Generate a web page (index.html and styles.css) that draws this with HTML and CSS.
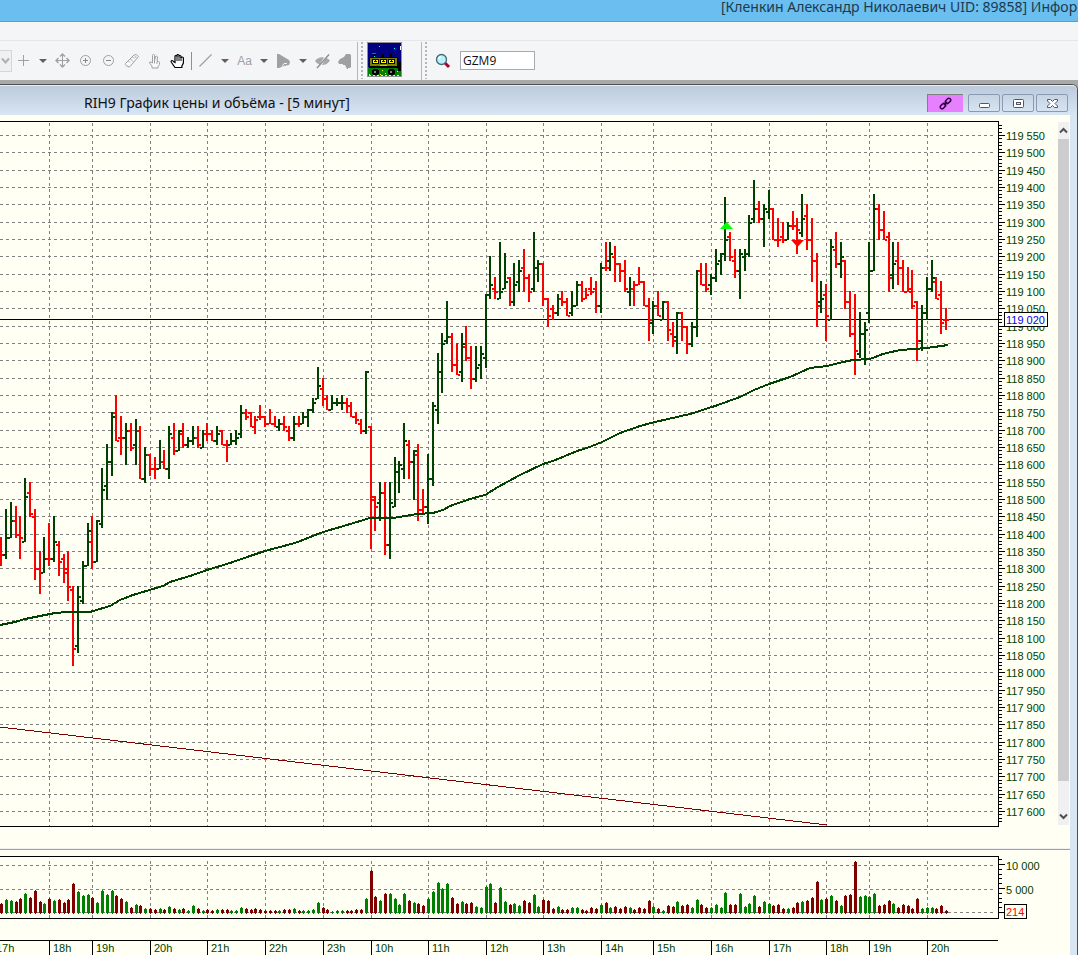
FILE: index.html
```html
<!DOCTYPE html>
<html lang="ru">
<head>
    <meta charset="UTF-8">
    <meta name="viewport" content="width=device-width, initial-scale=1.0">
    <title>RIH9 График цены и объёма</title>
    <link rel="stylesheet" href="styles.css">
</head>
<body>
    <!-- Application title -->
    <header class="app-title">[Кленкин Александр Николаевич UID: 89858] Инфор</header>
    <div class="menu-strip"></div>

    <!-- Toolbar -->
    <div class="toolbar">
        <button class="combo-end" aria-label="Список">
            <svg width="9" height="8" viewBox="0 0 9 8"><path d="M1 1.5l3.5 4 3.5-4" fill="none" stroke="#b0b0b0" stroke-width="2"/></svg>
        </button>
        <button class="tool" aria-label="Курсор">
            <svg width="15" height="15" viewBox="0 0 15 15"><path d="M7.5 2v11M2 7.5h11" stroke="#a0a0a0"/></svg>
        </button>
        <button class="caret" aria-label="Ещё"></button>
        <button class="tool" aria-label="Переместить">
            <svg width="15" height="15" viewBox="0 0 15 15"><path d="M7.5 1v13M1 7.5h13" stroke="#a0a0a0"/><path d="M5 3.5L7.5 1 10 3.5M5 11.5L7.5 14l2.5-2.5M3.5 5L1 7.5 3.5 10M11.5 5L14 7.5 11.5 10" fill="none" stroke="#a0a0a0" stroke-width="1.4"/></svg>
        </button>
        <button class="tool" aria-label="Увеличить">
            <svg width="15" height="15" viewBox="0 0 15 15"><circle cx="7.5" cy="7.5" r="5" fill="none" stroke="#a0a0a0"/><path d="M7.5 5v5M5 7.5h5" stroke="#888"/></svg>
        </button>
        <button class="tool" aria-label="Уменьшить">
            <svg width="15" height="15" viewBox="0 0 15 15"><circle cx="7.5" cy="7.5" r="5" fill="none" stroke="#a0a0a0"/><path d="M5 7.5h5" stroke="#888"/></svg>
        </button>
        <button class="tool" aria-label="Линейка">
            <svg width="16" height="16" viewBox="0 0 16 16"><path d="M1.5 10.5L10 2q2.500-1.500 4.500 1.500L6 13.500q-1 1-2 0L2 12.500q-1-1-.5-2z" fill="#fafafa" stroke="#a0a0a0"/><path d="M4.500 8l1.500 1.500M6.500 6L9 8.500M8.500 4l1.500 1.500M10.500 4h2" stroke="#a0a0a0"/></svg>
        </button>
        <button class="tool" aria-label="Указать">
            <svg width="15" height="16" viewBox="0 0 15 16"><path d="M5.500 9V2.500q0-1 1-1t1 1V8l1-4.500q1.500-1 2 .5L10 8.500h1.500q1 0 1 1v2l-1.500 2v1.500H5V13l-2.500-3q0-1.500 1.500-1l1.500 1z" fill="#fafafa" stroke="#a0a0a0"/><path d="M7.500 8v2.500M10 9v2" stroke="#a0a0a0"/></svg>
        </button>
        <button class="tool" aria-label="Прокрутка">
            <svg width="16" height="16" viewBox="0 0 16 16"><path d="M5 14.500L1.500 9.500q-1-1.500.5-2 1 0 2 1.500l1 .5V3.500q0-1 1-1t1 1v-1q0-1 1-1t1 1v1q0-1 1-1t1 1V5q0-1 1.200-1t1.200 1v5l-1.500 3v1.500z" fill="#fff" stroke="#000" stroke-width="1.200"/><path d="M7 3v5M9 3v5M11 4v4" stroke="#000"/></svg>
        </button>
        <span class="tool-separator"></span>
        <button class="tool" aria-label="Линия">
            <svg width="15" height="15" viewBox="0 0 15 15"><path d="M1.500 13.500l12-12" stroke="#a0a0a0" stroke-width="1.200"/></svg>
        </button>
        <button class="caret" aria-label="Ещё"></button>
        <button class="tool text-tool" aria-label="Текст">Aa</button>
        <button class="caret" aria-label="Ещё"></button>
        <button class="tool" aria-label="Фигура">
            <svg width="15" height="16" viewBox="0 0 15 16"><path d="M1 1h2l10 6 1 2-1 3-5 1-5 2H1z" fill="#a0a0a0"/><path d="M6 13.500l2-3h3" fill="none" stroke="#f4f5f7"/></svg>
        </button>
        <button class="caret" aria-label="Ещё"></button>
        <button class="tool" aria-label="Скрыть">
            <svg width="17" height="16" viewBox="0 0 17 16"><path d="M1 8q3.500-4.500 9-3.500L5.500 11.500Q3 11 1 8zM16 7.500q-3 4.500-8 4.500L12 5q2.500.5 4 2.500z" fill="#a8a8a8"/><path d="M3 15L15 1.500" stroke="#8c8c8c" stroke-width="1.300"/></svg>
        </button>
        <button class="tool" aria-label="Метка">
            <svg width="15" height="16" viewBox="0 0 15 16"><path d="M0 9l2-3 4-2 2-3h4l1 1v12l-1 1h-2v1H9l-2-4H5v-1H1z" fill="#a0a0a0"/></svg>
        </button>
        <span class="toolbar-end"></span>

        <span class="grip"></span>
        <button class="bus" aria-label="Автобус">
            <svg width="35" height="35" viewBox="0 0 35 35" shape-rendering="crispEdges">
                <path d="M0 0h35v35H0z" fill="#909090"/>
                <path d="M1 1h33v33H1z" fill="#000080"/>
                <path d="M1 25h33v9H1z" fill="#008000"/>
                <path d="M31 20h3v9h-3zM6 12h3v3H6zM14 12h3v3h-3zM22 12h3v3h-3z" fill="#000"/>
                <path d="M5 11h4v1H5zM26 22h1v1h-1z" fill="#00a000"/>
                <path d="M12 4h1v1h-1zM27 6h1v1h-1zM7 14h1v1H7z" fill="#0ff"/>
                <path d="M2 15h29v11H2z" fill="#000"/>
                <path d="M3 16h27v8H3z" fill="#808000"/>
                <path d="M5 17h7v5H5zM13 17h7v5h-7zM21 17h7v5h-7z" fill="#000"/>
                <path d="M6 18h5v3H6zM14 18h5v3h-5zM22 18h5v3h-5z" fill="#ff0"/>
                <path d="M8 18h1v1H8zM16 18h1v1h-1zM24 18h1v1h-1zM7 19h3v1H7zM15 19h3v1h-3zM23 19h3v1h-3z" fill="#000"/>
                <path d="M13 23h7v1h-7z" fill="#0ff"/>
                <path d="M6 27h5v1h1v4h-1v1H6v-1H5v-4h1zM22 27h5v1h1v4h-1v1h-5v-1h-1v-4h1z" fill="#000"/>
                <path d="M7 29h2v2H7zM23 29h2v2h-2z" fill="#808080"/>
                <path d="M15 28h1v1h-1zM18 31h1v1h-1zM30 29h1v1h-1zM2 32h1v1H2zM13 32h1v1h-1z" fill="#ff0"/>
                <path d="M33 4h1v4h-1z" fill="#fff"/>
                <path d="M2 33.500h32" stroke="#ff0" stroke-dasharray="2 2"/>
            </svg>
        </button>
        <span class="toolbar-end"></span>
        <span class="grip"></span>
        <label class="search" for="ticker">
            <svg width="16" height="16" viewBox="0 0 16 16"><path d="M10 10l4 4" stroke="#b00020" stroke-width="3"/><circle cx="6.500" cy="6.500" r="5" fill="#b9f0fa" stroke="#406878" stroke-width="1.300"/><path d="M4 6q0-2 2-2.500" fill="none" stroke="#fff" stroke-width="1.500"/></svg>
        </label>
        <input class="ticker" id="ticker" type="text" value="GZM9" aria-label="Инструмент">
    </div>

    <!-- Chart window -->
    <div class="workspace">
        <main class="window">
            <div class="window-caption">
                <h1 class="window-title">RIH9 График цены и объёма - [5 минут]</h1>
                <div class="window-buttons">
                    <button class="link-button" aria-label="Связь">
                        <svg width="13" height="13" viewBox="0 0 13 13"><g fill="none" stroke="#300040" stroke-width="1.500"><rect x="-2.500" y="-1.800" width="6" height="3.600" rx="1.800" transform="translate(3.600 9.400) rotate(-45)"/><rect x="-3.500" y="-1.800" width="6" height="3.600" rx="1.800" transform="translate(9.400 3.600) rotate(-45)"/><path d="M4.800 8.200l3.400-3.400"/></g></svg>
                    </button>
                    <button class="caption-button" aria-label="Свернуть">
                        <svg width="13" height="11" viewBox="0 0 13 11"><rect x="1.500" y="5.500" width="10" height="4" rx="1" fill="#fff" stroke="#505868"/></svg>
                    </button>
                    <button class="caption-button" aria-label="Развернуть">
                        <svg width="13" height="11" viewBox="0 0 13 11"><rect x="1.500" y="1.500" width="10" height="8" rx="1" fill="#fff" stroke="#505868"/><rect x="4.500" y="4.500" width="4" height="2" fill="#dde6f0" stroke="#505868"/></svg>
                    </button>
                    <button class="caption-button" aria-label="Закрыть">
                        <svg width="13" height="11" viewBox="0 0 13 11"><path d="M1.500 1.500h3l2 2 2-2h3v1.500L9 5.500l2.500 2.500v1.500h-3l-2-2-2 2h-3V8L4 5.500 1.500 3z" fill="#fff" stroke="#505868"/></svg>
                    </button>
                </div>
            </div>

            <div class="client">
                <div class="price-pane">
                    <svg class="chart" id="priceChart" role="img" aria-label="График цены"></svg>
                    <div class="scrollbar">
                        <button class="scroll-button" aria-label="Вверх">
                            <svg width="9" height="7" viewBox="0 0 9 7"><path d="M1 5.500L4.500 2 8 5.500" fill="none" stroke="#505050" stroke-width="2"/></svg>
                        </button>
                        <div class="scroll-thumb"></div>
                        <div class="scroll-track"></div>
                        <button class="scroll-button" aria-label="Вниз">
                            <svg width="9" height="7" viewBox="0 0 9 7"><path d="M1 1.500L4.500 5 8 1.500" fill="none" stroke="#505050" stroke-width="2"/></svg>
                        </button>
                    </div>
                </div>
                <div class="splitter"></div>
                <svg class="chart volume-chart" id="volumeChart" role="img" aria-label="График объёма"></svg>
                <svg class="chart time-axis" id="timeAxis" role="img" aria-label="Время"></svg>
            </div>
        </main>
    </div>

    <script src="chart.js"></script>
</body>
</html>
```
FILE: styles.css
```css
* {
    margin: 0;
    padding: 0;
    box-sizing: border-box;
}

body {
    font-family: "Noto Sans", "Open Sans", sans-serif;
    height: 100vh;
    display: flex;
    flex-direction: column;
    background: #f4f5f7;
    overflow: hidden;
}

button {
    border: none;
    background: none;
    font: inherit;
}

/* Application title */
.app-title {
    height: 22px;
    flex: none;
    padding-left: 721px;
    background: #6abef0;
    border-bottom: 1px solid #5a9fcb;
    color: #1d3a4c;
    font-size: 14px;
    line-height: 14px;
    white-space: nowrap;
    overflow: hidden;
}

.menu-strip {
    height: 19px;
    flex: none;
    border-bottom: 1px solid #e4e6e8;
}

/* Toolbar */
.toolbar {
    height: 39px;
    flex: none;
    display: flex;
    align-items: center;
}

.tool,
.caret,
.combo-end {
    flex: none;
    height: 24px;
    display: flex;
    align-items: center;
    justify-content: center;
}

.tool {
    width: 23px;
}

.combo-end {
    width: 12px;
    height: 22px;
    border: 1px solid #d4d6d8;
    border-left: none;
    background: #eff0f1;
}

.caret {
    width: 16px;
}

.caret::before {
    content: "";
    border: 4px solid transparent;
    border-top-color: #606060;
    border-bottom: none;
}

.text-tool {
    color: #a0a0a0;
    font: 12px "Liberation Sans", sans-serif;
}

.tool-separator {
    width: 1px;
    height: 18px;
    margin: 0 2px;
    background: #909090;
}

.toolbar-end {
    width: 1px;
    height: 38px;
    margin-right: 3px;
    background: #b4b6b8;
}

.grip {
    width: 2px;
    height: 37px;
    background: repeating-linear-gradient(#b4b6b8 0 2px, #f4f5f7 2px 4px);
}

.bus {
    width: 35px;
    height: 35px;
    margin: 0 19px 2px 4px;
}

.bus svg,
.search svg {
    display: block;
}

.search {
    margin: 0 9px 0 8px;
}

.ticker {
    width: 75px;
    height: 19px;
    padding: 0 2px;
    border: 1px solid #a8aab0;
    background: #fff;
    color: #111;
    font: 12px "Open Sans", sans-serif;
}

/* Chart window */
.workspace {
    flex: 1;
    min-height: 0;
    display: flex;
    padding-top: 4px;
    background: #a9a9a9;
}

.window {
    flex: 1;
    min-width: 0;
    display: flex;
    flex-direction: column;
    border-top: 1px solid #505050;
    border-right: 1px solid #4b4f55;
    border-radius: 0 6px 0 0;
    background: #d8e5f3;
}

.window-caption {
    height: 30px;
    flex: none;
    display: flex;
    align-items: center;
    justify-content: space-between;
    padding: 5px 9px 0 84px;
    border-top: 1px solid #e8eef5;
    border-radius: 0 5px 0 0;
    background: linear-gradient(#bccadb, #d8e5f3);
}

.window-title {
    color: #111;
    font-size: 14px;
    font-weight: 400;
    line-height: 18px;
    white-space: nowrap;
}

.window-buttons {
    display: flex;
    gap: 2px;
}

.link-button,
.caption-button {
    width: 32px;
    height: 18px;
    display: flex;
    align-items: center;
    justify-content: center;
}

.caption-button {
    border: 1px solid #8a99b4;
    border-radius: 2px;
    background: linear-gradient(#c6d3e3, #d6e3f1);
}

.link-button {
    width: 36px;
    margin-right: 3px;
    border-top: 1px solid #808080;
    border-left: 1px solid #808080;
    background: #e680ff;
}

.client {
    flex: 1;
    min-height: 0;
    display: flex;
    flex-direction: column;
    margin-right: 7px;
    background: #fffff3;
}

.price-pane {
    flex: 1;
    min-height: 0;
    display: flex;
}

.price-pane .chart {
    flex: 1;
    min-width: 0;
    height: 100%;
}

.chart {
    display: block;
    width: 100%;
}

.splitter {
    height: 2px;
    flex: none;
    border-bottom: 1px solid #a0a0a0;
    background: #f0f0f0;
}

.volume-chart {
    height: 75px;
    flex: none;
}

.time-axis {
    height: 30px;
    flex: none;
}

/* Scrollbar */
.scrollbar {
    width: 11px;
    flex: none;
    display: flex;
    flex-direction: column;
    margin: 7px 1px 23px 0;
    background: #f0f0f0;
}

.scroll-button {
    height: 17px;
    display: flex;
    align-items: center;
    justify-content: center;
}

.scroll-thumb {
    flex: 24;
    background: #cdcdcd;
}

.scroll-track {
    flex: 1;
}

/* Chart drawing */
.grid {
    stroke: #808080;
    stroke-dasharray: 3 3;
}

.frame {
    fill: none;
    stroke: #000;
}

.up {
    fill: #004000;
}

.down {
    fill: #f00;
}

.volume-up {
    fill: #008000;
}

.volume-down {
    fill: #800000;
}

.average {
    fill: none;
    stroke: #004000;
    stroke-width: 2;
}

.trend {
    fill: none;
    stroke: #800000;
}

.marker-buy {
    fill: #0f0;
}

.marker-sell {
    fill: #f00;
}

.label {
    fill: #004000;
    font: 11px "Liberation Sans", sans-serif;
}

.value-box {
    fill: #fffff3;
    stroke: #000;
}

.value-price {
    fill: #00f;
}

.value-volume {
    fill: #f00;
}
```
FILE: chart.js
```js
const NS = 'http://www.w3.org/2000/svg';

// colour, high, low, open, close; prices in tens of points above 117 000
const BARS = `
r 139 131 138 134,g 147 133 134 139,g 149 139 139 144,r 148 139 144 140,r 145 133 140 139,
g 156 138 138 151,r 155 145 152 146,r 147 127 145 130,r 135 123 130 129,g 139 129 129 133,
r 143 131 133 133,g 145 132 133 138,r 138 128 137 132,r 134 126 133 129,r 135 121 130 125,
r 125 102 124 107,g 125 106 108 122,g 132 120 121 131,g 143 131 131 141,
r 145 130 138 132,g 144 132 132 144,g 159 142 143 153,g 166 150 154 161,g 175 157 161 174,
r 180 167 175 167,r 174 163 168 168,g 172 160 168 170,r 172 164 170 165,g 173 160 166 170,
r 171 156 170 156,g 165 155 156 163,r 163 157 163 159,
r 162 156 159 159,g 167 159 159 161,r 164 159 161 159,g 171 156 159 169,r 172 163 168 164,
g 170 164 164 170,r 172 165 169 166,g 168 165 166 167,g 171 166 167 168,r 171 165 168 166,
g 170 165 165 169,r 172 167 169 169,
r 170 167 169 167,g 171 166 167 169,r 170 166 170 166,r 167 161 166 166,g 169 166 166 167,
g 170 166 167 168,g 177 168 169 175,r 176 173 175 174,r 175 171 175 171,r 174 169 171 173,
r 177 173 174 174,r 174 171 174 172,
r 176 172 172 172,r 174 171 172 171,g 173 170 171 172,r 174 170 172 171,r 171 167 170 168,
g 174 167 168 172,r 174 171 172 172,g 175 172 172 174,g 176 171 174 176,g 179 175 176 178,
g 188 179 179 183,r 185 177 182 179,
r 180 176 179 176,g 180 176 176 178,g 179 177 178 178,g 180 176 178 178,r 179 175 178 177,
r 178 174 177 174,r 175 172 174 173,r 173 169 172 170,g 187 169 170 187,
r 171 136 171 150,r 151 141 151 148,g 155 144 149 152,r 155 134 152 137,g 155 133 137 149,
g 162 148 148 158,g 161 152 158 160,g 172 156 159 167,r 167 156 166 161,g 164 150 161 164,
r 166 144 163 147,r 153 146 147 148,
g 163 143 148 156,g 178 154 156 177,g 192 172 176 187,g 198 181 187 195,g 207 195 196 197,
r 198 187 197 189,r 195 186 189 186,g 198 184 187 195,r 200 190 194 191,r 194 182 191 185,
g 194 184 185 188,g 194 185 189 192,
g 209 188 191 209,g 220 208 209 212,r 214 208 211 210,g 224 208 208 210,g 221 211 211 213,
r 214 206 214 207,g 218 206 207 212,g 219 210 213 216,r 222 210 217 214,r 215 207 214 210,
g 227 210 211 217,g 219 213 217 218,
r 218 206 218 208,r 208 200 208 203,r 206 202 205 204,g 209 203 204 208,r 210 206 208 207,
r 208 203 207 203,g 210 203 204 206,g 213 206 206 212,r 213 207 212 208,r 211 208 208 209,
r 214 209 211 210,r 213 204 211 206,
g 218 204 206 217,r 224 216 217 217,g 224 216 219 221,r 223 213 220 218,r 218 213 218 216,
r 219 210 216 211,g 214 206 210 211,r 213 206 211 212,r 217 212 212 213,r 213 206 213 206,
r 208 196 206 202,
g 207 198 201 206,r 210 203 206 203,g 207 202 202 207,r 207 196 207 199,r 201 194 198 196,
g 204 192 197 204,r 204 196 204 200,r 200 192 200 195,g 201 194 195 200,g 216 197 200 216,
r 218 212 216 212,r 218 210 212 211,
g 215 209 212 214,g 222 213 214 218,g 221 215 219 221,g 237 219 221 225,r 227 219 226 220,
r 222 214 219 216,g 222 208 216 221,g 222 216 220 221,g 232 220 221 230,g 242 230 231 234,
r 236 230 234 231,g 235 223 231 234,
g 239 231 233 234,r 234 225 234 225,r 231 223 225 225,r 230 224 226 225,g 230 225 225 229,
r 233 228 229 229,r 231 221 229 228,g 238 226 227 231,r 235 222 232 225,r 231 213 225 219,
r 221 200 219 206,g 213 204 207 208,
r 212 196 209 203,g 225 202 202 223,r 227 217 222 218,g 224 214 218 220,r 219 205 219 207,
r 210 197 207 198,r 209 186 198 193,g 204 191 192 198,g 201 189 198 199,
g 224 201 204 216,g 238 216 216 234,r 235 225 234 228,r 233 225 228 225,r 227 210 226 214,
g 224 211 215 218,r 224 212 219 217,r 219 210 217 210,r 217 210 210 210,r 216 205 211 206,
r 207 190 207 196,g 206 193 196 204,
g 214 202 204 211,g 219 210 211 214,r 214 208 213 208,r 213 198 209 201,r 205 199 202 202
`.trim().split(',').map(row => row.trim().split(' '));

// bar heights, 24 units = 5 000 contracts
const VOLUMES = [
    9, 13, 12, 11, 14, 19, 15, 22, 11, 9,
    14, 12, 13, 10, 13, 29, 21, 17, 18,
    15, 10, 22, 18, 22, 17, 14, 11, 5, 8, 7, 4,
    4, 3, 4, 3, 6, 4, 3, 4, 2, 7, 4, 2,
    3, 2, 3, 3, 3, 2, 2, 5, 4, 3, 4, 3,
    2, 2, 2, 2, 3, 3, 4, 2, 2, 2, 3, 10,
    5, 3, 1, 2, 2, 2, 2, 3, 3, 14,
    42, 16, 12, 19, 19, 14, 8, 19, 12, 10, 9, 7,
    14, 21, 30, 24, 29, 15, 9, 11, 9, 10, 6, 5,
    26, 29, 10, 25, 11, 8, 9, 7, 12, 10, 18, 6,
    13, 12, 4, 6, 3, 3, 5, 5, 3, 2, 5, 4,
    8, 10, 5, 6, 4, 6, 5, 3, 5, 4, 12,
    6, 4, 2, 7, 6, 11, 7, 8, 5, 13, 8, 5,
    5, 8, 5, 20, 8, 8, 19, 6, 9, 17, 6, 11,
    9, 7, 8, 4, 4, 5, 10, 11, 12, 15, 31, 13,
    14, 17, 12, 7, 17, 18, 51, 16, 17,
    16, 19, 7, 8, 12, 9, 5, 8, 7, 4, 14, 4,
    5, 5, 4, 7, 2
];

// bar number at which each hour starts
const HOURS = [
    [-12, '17h'], [0, '18h'], [9, '19h'], [21, '20h'], [33, '21h'], [45, '22h'], [57, '23h'],
    [67, '10h'], [79, '11h'], [91, '12h'], [103, '13h'], [115, '14h'], [126, '15h'],
    [138, '16h'], [150, '17h'], [162, '18h'], [171, '19h'], [183, '20h']
];

const AVERAGE = '0,510 15,507 25,504 40,501 55,498 67,497 90,497 100,494 110,491 120,485 133,480 ' +
    '143,477 163,471 170,467 190,461 207,455 230,448 250,441 265,436 295,428 323,417 347,410 ' +
    '370,403 393,403 417,399 433,398 443,395 450,391 470,384 485,380 498,372 520,360 543,349 ' +
    '553,346 577,336 587,333 602,327 620,318 640,311 655,307 690,299 715,291 740,282 754,275 ' +
    '769,269 790,262 810,253 827,251 843,247 853,245 870,244 883,239 900,235 927,233 948,230';

const FIRST_BAR = -10;
const PLOT_RIGHT = 998;
const AXIS_SPACE = 60;
const TICK = 52 / 15;

const barX = i => Math.round(49.2 + i * 4.796);
const priceY = v => 20 + Math.round((255 - v) * TICK);

function add(parent, name, attrs, text) {
    const el = document.createElementNS(NS, name);
    for (const key in attrs) el.setAttribute(key, attrs[key]);
    if (text) el.textContent = text;
    parent.appendChild(el);
    return el;
}

function line(parent, x1, y1, x2, y2, cls) {
    add(parent, 'path', { d: `M${x1} ${y1}L${x2} ${y2}`, class: cls, 'shape-rendering': 'crispEdges' });
}

function rect(parent, x, y, width, height, cls) {
    add(parent, 'rect', { x, y, width, height, class: cls, 'shape-rendering': 'crispEdges' });
}

// The chart keeps its right edge next to the axis
function start(id, space) {
    const svg = document.getElementById(id);
    svg.innerHTML = '';
    const shift = svg.clientWidth - PLOT_RIGHT - space;
    const g = add(svg, 'g', { transform: `translate(${shift} 0)` });
    return { g, left: -shift, height: svg.clientHeight };
}

function format(n) {
    return String(n).replace(/(\d)(\d{3})$/, '$1 $2');
}

function drawPrice() {
    const { g, left, height } = start('priceChart', AXIS_SPACE);
    const bottom = height - 22;

    HOURS.forEach(([i]) => line(g, barX(i) + 0.5, 8, barX(i) + 0.5, bottom, 'grid'));

    for (let v = 258; priceY(v) < bottom - 2; v--) {
        const y = priceY(v) + 0.5;
        const major = v % 5 === 0;
        line(g, PLOT_RIGHT, y, PLOT_RIGHT + (major ? 7 : 4), y, 'frame');
        if (major) {
            line(g, left, y, PLOT_RIGHT - 4, y, 'grid');
            add(g, 'text', { x: 1006, y: y + 4, class: 'label' }, format(117000 + v * 10));
        }
    }

    line(g, left, 6.5, PLOT_RIGHT + 1, 6.5, 'frame');
    line(g, left, bottom + 0.5, PLOT_RIGHT + 1, bottom + 0.5, 'frame');
    line(g, PLOT_RIGHT + 0.5, 6, PLOT_RIGHT + 0.5, bottom, 'frame');
    line(g, left, 204.5, PLOT_RIGHT, 204.5, 'frame');
    add(g, 'polyline', { points: '0,612 827,710', class: 'trend', 'shape-rendering': 'crispEdges' });

    BARS.forEach(([colour, high, low, open, close], n) => {
        const x = barX(n + FIRST_BAR);
        const cls = colour === 'g' ? 'up' : 'down';
        rect(g, x - 1, priceY(high), 2, priceY(low) - priceY(high) + 1, cls);
        rect(g, x - 3, priceY(open), 2, 2, cls);
        rect(g, x + 1, priceY(close), 2, 2, cls);
    });

    add(g, 'polyline', { points: AVERAGE, class: 'average', 'shape-rendering': 'crispEdges' });
    add(g, 'path', { d: 'M726.5 107l6.500 7h-13z', class: 'marker-buy' });
    add(g, 'path', { d: 'M797.5 132l-6.500-7h13z', class: 'marker-sell' });

    rect(g, 1004.5, 197.5, 43, 14, 'value-box');
    add(g, 'text', { x: 1006, y: 209, class: 'label value-price' }, '119 020');
}

function drawVolume() {
    const { g, left } = start('volumeChart', AXIS_SPACE + 12);

    HOURS.forEach(([i]) => line(g, barX(i) + 0.5, 11, barX(i) + 0.5, 68, 'grid'));
    [15.5, 39.5, 62.5].forEach(y => line(g, left, y, PLOT_RIGHT - 4, y, 'grid'));

    for (let k = 0; k <= 11; k++) {
        const y = Math.round(63 - k * 4.8) - 0.5;
        line(g, PLOT_RIGHT, y, PLOT_RIGHT + (k % 5 ? 4 : 7), y, 'frame');
    }
    line(g, left, 6.5, PLOT_RIGHT + 1, 6.5, 'frame');
    line(g, left, 68.5, PLOT_RIGHT + 1, 68.5, 'frame');
    line(g, PLOT_RIGHT + 0.5, 6, PLOT_RIGHT + 0.5, 69, 'frame');

    VOLUMES.forEach((v, n) => {
        const x = barX(n + FIRST_BAR);
        const cls = BARS[n][0] === 'g' ? 'volume-up' : 'volume-down';
        rect(g, x - 1, 63 - v, 3, v, cls);
        rect(g, x, 62 - v, 1, v + 2, cls);
    });

    add(g, 'text', { x: 1006, y: 20, class: 'label' }, '10 000');
    add(g, 'text', { x: 1006, y: 44, class: 'label' }, '5 000');
    rect(g, 1004.5, 54.5, 22, 14, 'value-box');
    add(g, 'text', { x: 1006, y: 66, class: 'label value-volume' }, '214');
}

function drawTime() {
    const { g, left } = start('timeAxis', AXIS_SPACE + 12);
    line(g, left, 15.5, PLOT_RIGHT, 15.5, 'frame');
    HOURS.forEach(([i, hour]) => {
        line(g, barX(i) + 0.5, 15, barX(i) + 0.5, 30, 'frame');
        add(g, 'text', { x: barX(i) + 4, y: 27, class: 'label' }, hour);
    });
}

function draw() {
    drawPrice();
    drawVolume();
    drawTime();
}

window.addEventListener('resize', draw);
draw();
```
